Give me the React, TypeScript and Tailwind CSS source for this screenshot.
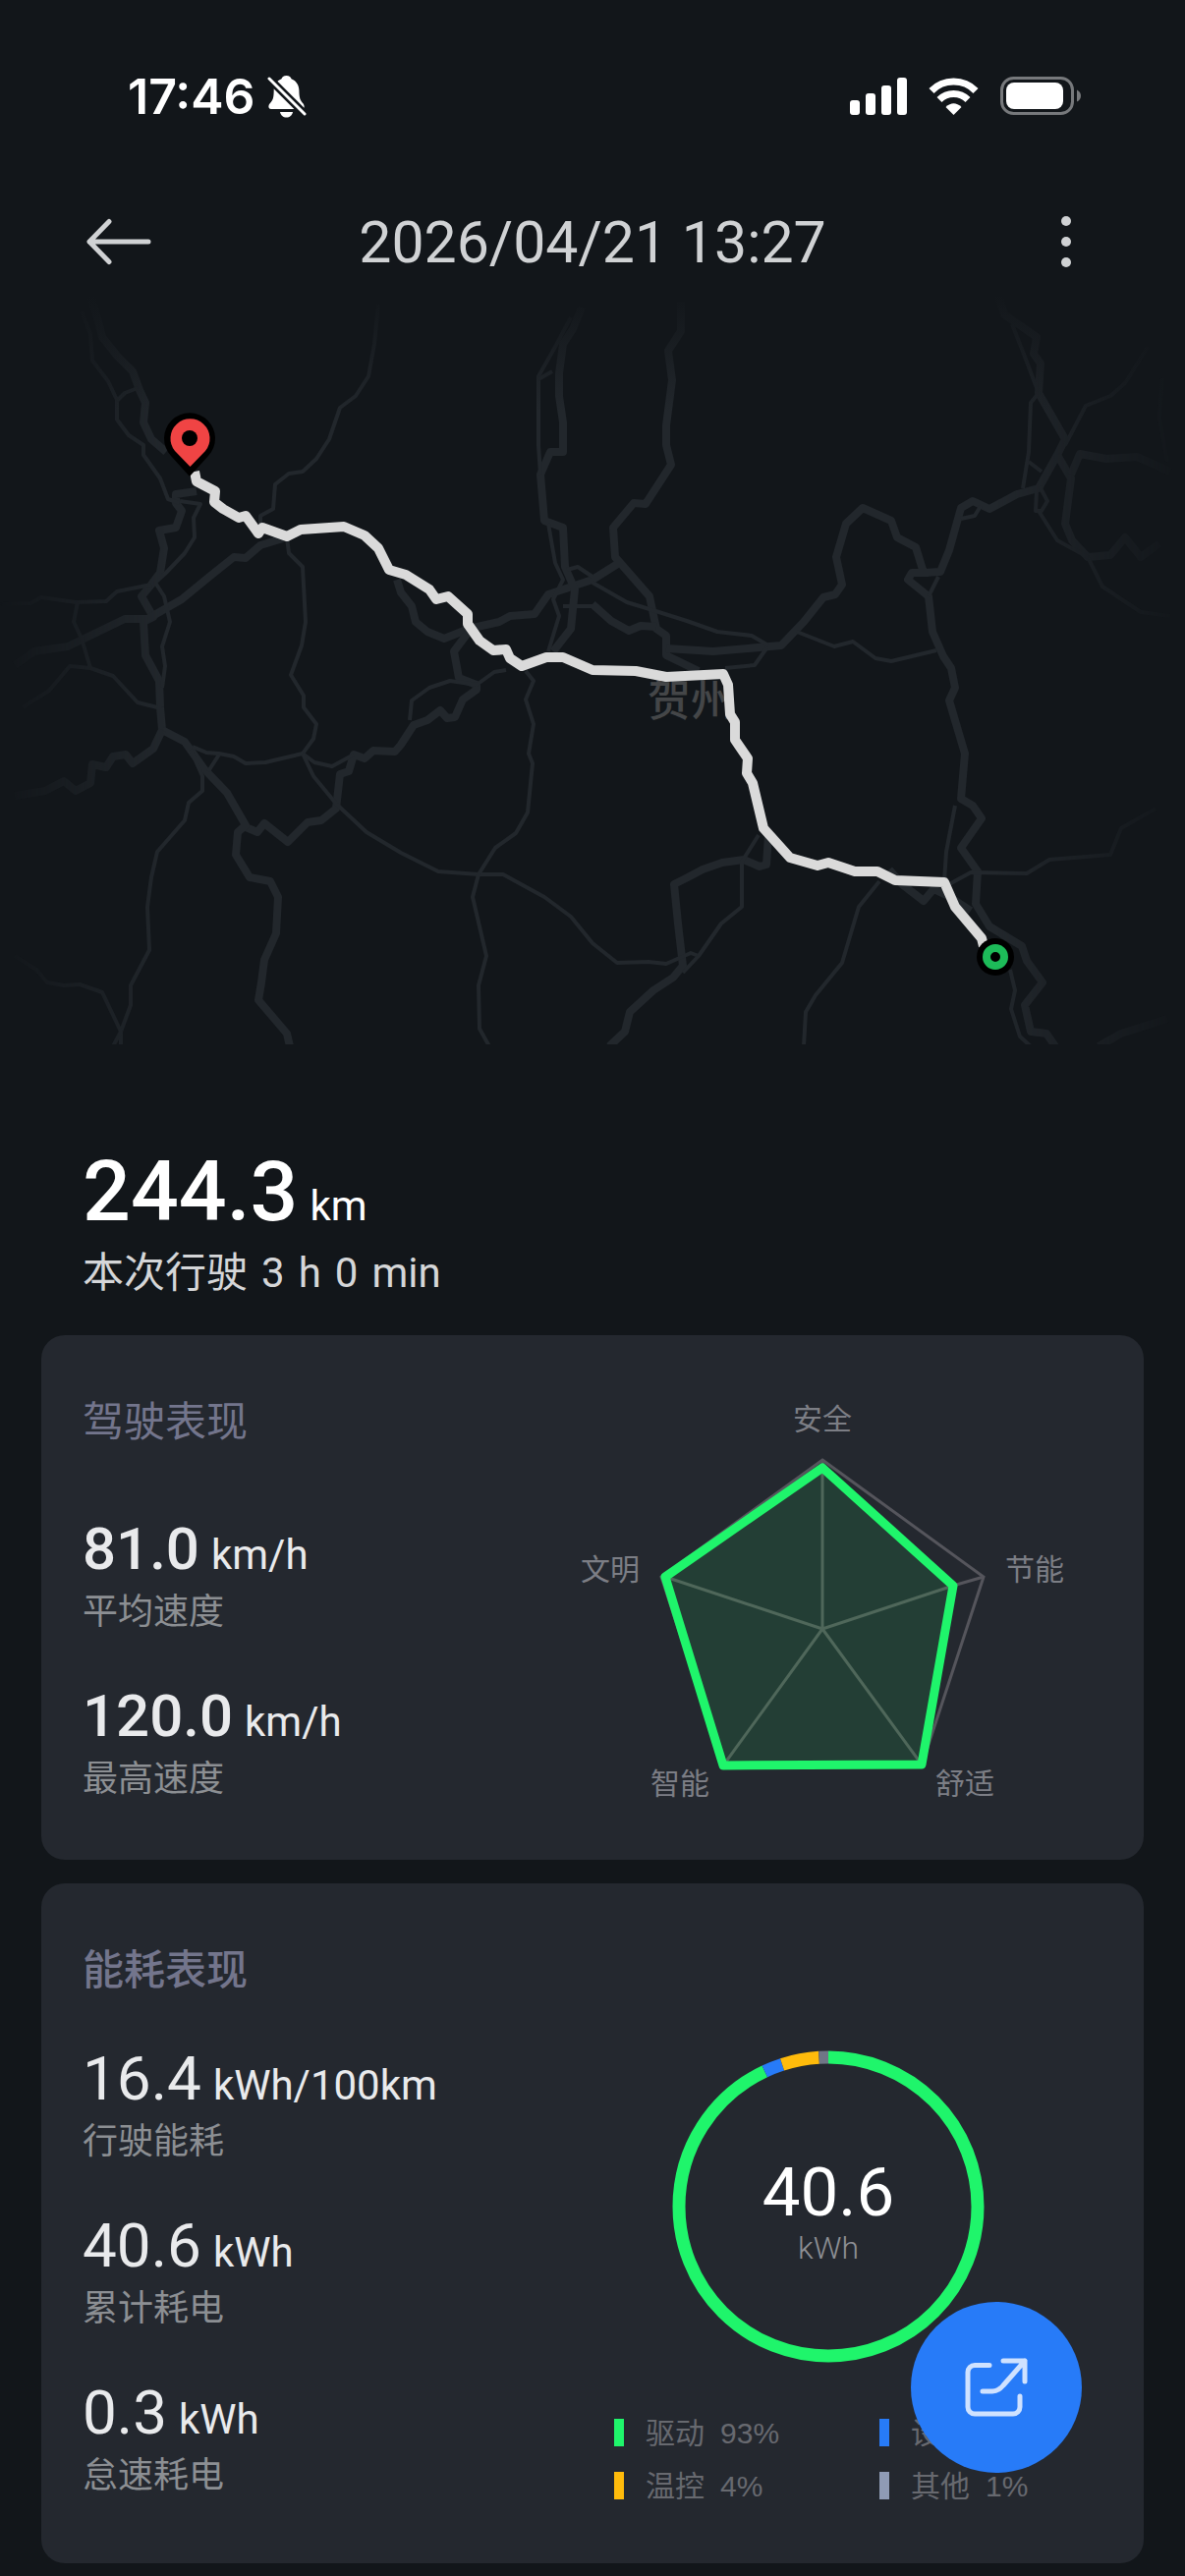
import React from "react";

const MAJOR_ROADS = [
  "92,300 100,327 104,343 119,362 135,378 142,397 148,410 146,430 154,447 169,460",
  "200,500 179,503 179,512 185,520 179,537 162,540 167,558 163,583 154,595 144,607 156,628 146,633 148,667 162,693 163,720 165,743",
  "15,677 35,663 69,658 127,630 150,630 185,610 213,587 238,567 250,568 265,555 288,548",
  "404,590 408,603 419,617 423,633 435,643 452,650 477,640 508,633 519,627 544,625 558,605 603,590 630,573",
  "477,643 462,663 467,690 485,697 485,702 471,712 463,730 455,731 448,723 435,733 421,738 408,758 402,765 380,764 371,772 360,768 355,785 346,788 342,823 327,835 313,837 293,857 269,838 262,847 250,842",
  "165,743 188,755 208,783 231,807 250,840 242,847 240,870 254,893 275,897 283,913 281,950 269,977 266,1000 263,1018 292,1052 295,1065",
  "165,743 156,762 135,777 128,768 115,770 108,781 94,778 92,797 77,805 65,795 46,805 15,810",
  "592,313 583,335 573,350 569,380 569,403 573,430 573,460 560,460 550,483 554,530 573,537 575,577 585,600 581,640 563,663",
  "693,307 693,337 680,357 684,387 678,433 678,453 683,473 657,513 645,512 624,537 626,567 661,607 668,640 678,647 678,667 711,683",
  "603,615 622,632 640,642 652,637 668,638",
  "678,660 726,663 795,657 818,633 838,608 850,605 857,595 851,567 861,533 878,517 907,530 913,547 932,557 940,583 957,582 966,560 978,517 990,510 1007,518 1035,503 1057,497 1076,463 1084,447 1057,400 1059,370 1052,360 1055,343 1022,320 1016,300",
  "945,583 928,583 924,590 945,607 949,643 960,668 968,680 972,700 966,713 982,767 978,813 990,820 999,833 978,863 995,887 993,920 1007,943 1040,963 1045,978 1061,1000 1043,1023 1049,1050 1065,1052 1074,1065",
  "1076,463 1090,487 1084,533 1091,550 1107,567 1130,565 1145,547 1161,567 1180,553",
  "1090,483 1099,462 1126,467 1157,465 1191,480",
  "782,850 780,880 773,882 757,875 735,878 715,885 700,893 686,900 690,940 695,983 685,995 665,1008 641,1030 636,1050 620,1065",
  "905,885 918,900 940,917 950,905 965,912 988,927",
  "1118,1065 1141,1052 1188,1037",
];

const MINOR_ROADS = [
  "83,317 92,340 94,367 110,388 119,407 119,427 131,443 146,453 146,463 163,487 171,508 183,512",
  "119,408 127,400 140,395",
  "183,510 204,513 197,527 198,547 188,563 169,583 158,593 167,607 173,633 165,658 168,678 165,700",
  "0,615 31,614 42,608 77,613 108,612 119,602 154,595",
  "79,613 75,633 83,650 92,680 71,678 50,703 23,720",
  "92,680 115,688 140,715 160,720",
  "385,310 381,350 375,383 362,403 346,415 335,447 322,467 308,480 294,482 280,493 278,518 265,525 265,537",
  "292,547 294,563 308,577 311,633 307,657 296,687 309,708 309,720 322,737 319,752 308,767",
  "196,760 210,766 223,767 238,770 250,777 270,776 308,767 320,776 338,780 360,768",
  "223,768 212,785",
  "308,767 319,790 342,818 373,847 408,868 446,887 487,890 512,890 554,913 581,933 603,960 628,980 660,979 678,981 703,970 711,973",
  "194,763 206,790 206,805 192,817 188,835 160,867 154,893 150,923 152,967 133,1003 133,1023 123,1050 123,1065",
  "15,973 37,987 48,1000 65,1003 81,1002 104,1010 123,1050 115,1065",
  "535,683 543,693 535,712 543,737 538,767 542,777 537,827 525,848 504,863 487,890 481,913 495,973 487,1003 488,1047 498,1065",
  "417,733 419,713 437,700 458,693 485,697 503,684 515,682",
  "581,323 565,353 548,383 548,453 550,483",
  "548,386 562,378",
  "558,533 565,573 573,590 563,610 569,627 558,663",
  "577,580 588,577 603,587",
  "573,617 603,617",
  "603,593 638,613 661,620 699,632 730,643 765,647 782,657",
  "738,680 768,677 780,660",
  "811,643 849,658 868,653 891,670 907,673 953,662",
  "955,587 945,607",
  "1041,497 1047,460 1049,410 1057,400 1043,363 1030,330",
  "1047,470 1060,480",
  "978,528 992,525 998,515",
  "1084,453 1105,413 1130,403 1145,390 1168,353",
  "1055,500 1054,520 1060,520 1066,510 1058,495",
  "1057,520 1076,550 1107,567 1122,597 1161,623 1191,627",
  "966,900 988,888 1045,889 1068,875 1130,870 1141,843 1176,823",
  "972,820 963,867 961,897",
  "895,897 874,923 857,980 830,1013 820,1030 818,1065",
  "772,850 755,877 755,923 734,940 711,973 695,990",
  "1028,987 1033,1008 1029,1027 1038,1055 1049,1065",
  "1183,385 1180,425 1188,470",
];

const ROUTE =
  "198,480 200,490 219,500 218,511 227,518 243,527 250,525 263,543 267,537 292,546 306,539 350,536 371,545 385,558 396,580 413,585 437,600 444,610 456,607 476,625 476,635 488,652 502,662 515,661 519,670 531,678 556,669 573,669 603,682 647,683 678,689 736,686 741,697 743,727 748,735 748,753 761,772 760,787 766,797 777,843 804,873 832,881 843,878 870,887 893,887 911,896 961,898 972,923 999,955 1001,963";

function RouteMap() {
  return (
    <svg viewBox="0 300 1206 860" className="block w-full" role="img" aria-label="行驶轨迹">
      <defs>
        <linearGradient id="fadeX" x1="0" x2="1" y1="0" y2="0">
          <stop offset="0" stopColor="#000" />
          <stop offset="0.14" stopColor="#fff" />
          <stop offset="0.84" stopColor="#fff" />
          <stop offset="1" stopColor="#000" />
        </linearGradient>
        <linearGradient id="fadeY" x1="0" x2="0" y1="0" y2="1">
          <stop offset="0" stopColor="#12161a" />
          <stop offset="1" stopColor="#12161a" stopOpacity="0" />
        </linearGradient>
        <mask id="edge" maskUnits="userSpaceOnUse" x="0" y="300" width="1206" height="763">
          <rect x="0" y="300" width="1206" height="763" fill="url(#fadeX)" />
        </mask>
      </defs>
      <g mask="url(#edge)" fill="none" stroke="#22272c" strokeLinejoin="round">
        {MAJOR_ROADS.map((points) => (
          <polyline key={points} points={points} strokeWidth="8" />
        ))}
        {MINOR_ROADS.map((points) => (
          <polyline key={points} points={points} strokeWidth="4" />
        ))}
      </g>
      <rect x="0" y="300" width="1206" height="120" fill="url(#fadeY)" />
      <text x="659" y="729" fontSize="44" fontWeight="500" fill="#444648">贺州</text>
      <polyline points={ROUTE} fill="none" stroke="#dadada" strokeWidth="10" strokeLinejoin="round" />
      <path d="M193 485L174 464A26 26 0 1 1 212 464Z" fill="#000" />
      <path d="M193.500 475L178 459A20 20 0 1 1 209 459Z" fill="#f04444" />
      <circle cx="193" cy="446" r="8" fill="#000" />
      <circle cx="1013" cy="974" r="19" fill="#000" />
      <circle cx="1013" cy="974" r="9" fill="none" stroke="#1dbb59" strokeWidth="8" />
    </svg>
  );
}

function StatusBar() {
  return (
    <div className="flex h-48 items-center justify-between pt-1 pr-[105px] pl-[130px] text-white">
      <div className="flex items-center gap-3">
        <span className="font-['Inter',sans-serif] text-[50px] leading-none font-semibold">17:46</span>
        <svg viewBox="0 0 40 44" className="h-11 w-10" fill="#fff" aria-label="静音">
          <path d="M19.500 1c-3 0-4.500 1.500-5 3.200C9 6.500 6.800 11 6.700 16c-.1 8-1 10-4.200 13.500C.7 31.700 1 35 4 35h31c3 0 3.300-3 1.600-5.500C33.500 26 32.500 24 32.400 16c-.1-5-2.400-9.500-7.900-11.800C24 2.500 22.500 1 19.500 1z" />
          <path d="M13 38h13c-.6 3.500-3.200 5.500-6.500 5.500S13.600 41.500 13 38z" />
          <path d="M0 2l40 40" stroke="#12161a" strokeWidth="8" />
          <path d="M2 4l36 36" stroke="#fff" strokeWidth="3" strokeLinecap="round" />
        </svg>
      </div>
      <div className="flex items-center gap-[22px]">
        <svg viewBox="0 0 58 38" className="h-[38px] w-[58px]" fill="#fff" aria-label="信号">
          <rect x="0" y="23" width="10" height="15" rx="3" />
          <rect x="16" y="16" width="10" height="22" rx="3" />
          <rect x="32" y="8" width="10" height="30" rx="3" />
          <rect x="48" y="0" width="10" height="38" rx="3" />
        </svg>
        <svg viewBox="0 0 51 38" className="h-[38px] w-[51px]" aria-label="无线网络">
          <g fill="none" stroke="#fff" strokeWidth="7">
            <path d="M3 13.500Q12 4 25.500 4T48 13.500" />
            <path d="M11 22.500Q17 16.500 25.500 16.500T40 22.500" />
          </g>
          <path d="M25.500 38L17.500 30Q25.500 22.500 33.500 30Z" fill="#fff" />
        </svg>
        <svg viewBox="0 0 83 40" className="h-10 w-[83px]" aria-label="电量">
          <rect x="1.500" y="1.500" width="72" height="36" rx="12" fill="none" stroke="#77797c" strokeWidth="3" />
          <rect x="6" y="6" width="58" height="27" rx="8" fill="#fff" />
          <path d="M78 13.500q4 2 4 6t-4 6z" fill="#77797c" />
        </svg>
      </div>
    </div>
  );
}

function Header() {
  return (
    <header className="flex h-[108px] items-center justify-between px-[88px] text-[#d0d2d4]">
      <button type="button" aria-label="返回" className="flex w-[66px]">
        <svg viewBox="0 0 66 48" className="h-12 w-[66px]" fill="none" stroke="currentColor" strokeWidth="5" strokeLinecap="round" strokeLinejoin="round">
          <path d="M23 3.500L3 24l20 20.500M3 24h60" />
        </svg>
      </button>
      <h1 className="text-[59px] leading-none">2026/04/21 13:27</h1>
      <button type="button" aria-label="更多" className="flex w-[66px] justify-end">
        <svg viewBox="0 0 66 54" className="h-[54px] w-[66px]" fill="currentColor">
          <circle cx="33" cy="6" r="5" />
          <circle cx="33" cy="27" r="5" />
          <circle cx="33" cy="48" r="5" />
        </svg>
      </button>
    </header>
  );
}

type StatProps = { value: string; unit: string; label: string; strong?: boolean };

function Stat({ value, unit, label, strong = false }: StatProps) {
  return (
    <div>
      <dd className="flex items-baseline gap-3 text-[#e9eaec]">
        <span className={strong ? "text-[60px] leading-[70px] font-medium" : "text-[62px] leading-[70px]"}>{value}</span>
        <span className="text-[42px] leading-none">{unit}</span>
      </dd>
      <dt className="mt-[5px] text-4xl leading-[48px] text-[#8c8f93]">{label}</dt>
    </div>
  );
}

const AXES = [
  { label: "安全", x: 837, y: 1456 },
  { label: "节能", x: 1053, y: 1609 },
  { label: "舒适", x: 982, y: 1827 },
  { label: "智能", x: 692, y: 1827 },
  { label: "文明", x: 621, y: 1609 },
];

function Radar() {
  return (
    <svg viewBox="580 1400 520 440" className="h-[440px] w-[520px]" role="img" aria-label="驾驶表现雷达图">
      <path d="M837 1495L970 1615L938 1797L736 1798L677 1606Z" fill="#1ff56b" fillOpacity="0.11" />
      <g fill="none" stroke="#55555c" strokeWidth="3">
        <path d="M837 1487L1001 1606L938 1798L736 1798L673 1606Z" />
        <path d="M837 1495V1487M970 1615L1001 1606" />
      </g>
      <path d="M837 1659V1495M837 1659L970 1615M837 1659L938 1797M837 1659L736 1798M837 1659L677 1606" fill="none" stroke="#4f675a" strokeWidth="3" />
      <path d="M837 1495L970 1615L938 1797L736 1798L677 1606Z" fill="none" stroke="#1ff56b" strokeWidth="9" strokeLinejoin="round" />
      {AXES.map((a) => (
        <text key={a.label} x={a.x} y={a.y} fontSize="30" textAnchor="middle" fill="#7c7e85">
          {a.label}
        </text>
      ))}
    </svg>
  );
}

const LEGEND = [
  { label: "驱动", pct: 93, bar: "bg-[#1ff56b]", color: "#1ff56b" },
  { label: "设备", pct: 2, bar: "bg-[#277bf8]", color: "#277bf8" },
  { label: "温控", pct: 4, bar: "bg-[#ffbb0b]", color: "#ffbb0b" },
  { label: "其他", pct: 1, bar: "bg-[#8f9bb5]", color: "#6f7686" },
];

function EnergyRing() {
  let start = 0;
  return (
    <div className="relative size-[318px]">
      <svg viewBox="0 0 318 318" className="size-full -rotate-90" fill="none" strokeWidth="13" aria-hidden="true">
        {LEGEND.map((item) => {
          const offset = -start;
          start += item.pct;
          return (
            <circle key={item.label} cx="159" cy="159" r="152" pathLength={100} stroke={item.color} strokeDasharray={`${item.pct} ${100 - item.pct}`} strokeDashoffset={offset} />
          );
        })}
      </svg>
      <div className="absolute inset-0 flex flex-col items-center justify-center pt-3">
        <span className="text-[69px] leading-[72px] text-white">40.6</span>
        <span className="text-[32px] leading-10 font-light text-[#8d8f94]">kWh</span>
      </div>
    </div>
  );
}

export default function App() {
  return (
    <main className="relative min-h-screen bg-[#12161a] font-['Roboto','Noto_Sans_CJK_SC',sans-serif]">
      <StatusBar />
      <Header />
      <RouteMap />

      <section className="flex flex-col px-[84px] text-white">
        <p className="flex items-baseline gap-3">
          <span className="text-[86px] leading-[106px] font-medium">244.3</span>
          <span className="text-[42px] leading-none">km</span>
        </p>
        <p className="flex gap-[14px] text-[42px] leading-[60px] text-[#d5d6d8]">
          <span>本次行驶</span>
          <span>3</span>
          <span>h</span>
          <span>0</span>
          <span>min</span>
        </p>
      </section>

      <div className="mt-[33px] flex flex-col gap-6 px-[42px] pb-3">
        <section className="flex h-[534px] justify-between rounded-3xl bg-[#24282f] pt-10 pr-16 pl-[42px]">
          <div>
            <h2 className="mt-[17px] text-[42px] leading-[64px] text-[#73758c]">驾驶表现</h2>
            <dl className="mt-[62px] flex flex-col gap-[47px]">
              <Stat value="81.0" unit="km/h" label="平均速度" strong />
              <Stat value="120.0" unit="km/h" label="最高速度" strong />
            </dl>
          </div>
          <Radar />
        </section>

        <section className="flex h-[692px] justify-between rounded-3xl bg-[#24282f] pr-[103px] pl-[42px]">
          <div>
            <h2 className="mt-[57px] text-[42px] leading-[64px] font-medium text-[#73758c]">能耗表现</h2>
            <dl className="mt-[43px] flex flex-col gap-[47px]">
              <Stat value="16.4" unit="kWh/100km" label="行驶能耗" />
              <Stat value="40.6" unit="kWh" label="累计耗电" />
              <Stat value="0.3" unit="kWh" label="怠速耗电" />
            </dl>
          </div>
          <div className="flex w-[436px] flex-col items-center pt-[170px]">
            <EnergyRing />
            <ul className="mt-[44px] grid w-full grid-cols-[270px_1fr]">
              {LEGEND.map((item) => (
                <li key={item.label} className="flex h-[54px] items-center text-[30px] text-[#67696f]">
                  <span className={`mr-[22px] h-7 w-[10px] ${item.bar}`} />
                  {item.label}
                  <span className="ml-4 font-['Liberation_Sans',sans-serif]">{item.pct}%</span>
                </li>
              ))}
            </ul>
          </div>
        </section>
      </div>

      <button type="button" aria-label="分享" className="absolute right-[105px] bottom-[105px] flex size-[174px] items-center justify-center rounded-full bg-[#277bf8]">
        <svg viewBox="0 0 64 60" className="h-[60px] w-16" fill="none" stroke="#cfe2ff" strokeWidth="5" strokeLinecap="round" strokeLinejoin="round">
          <path d="M25 7.500H10A7 7 0 0 0 3 14.500V50A7 7 0 0 0 10 57H49A7 7 0 0 0 56 50V39" />
          <path d="M39 3H61V24M61 3L39 28Q34 34 28 34H18" />
        </svg>
      </button>
    </main>
  );
}
